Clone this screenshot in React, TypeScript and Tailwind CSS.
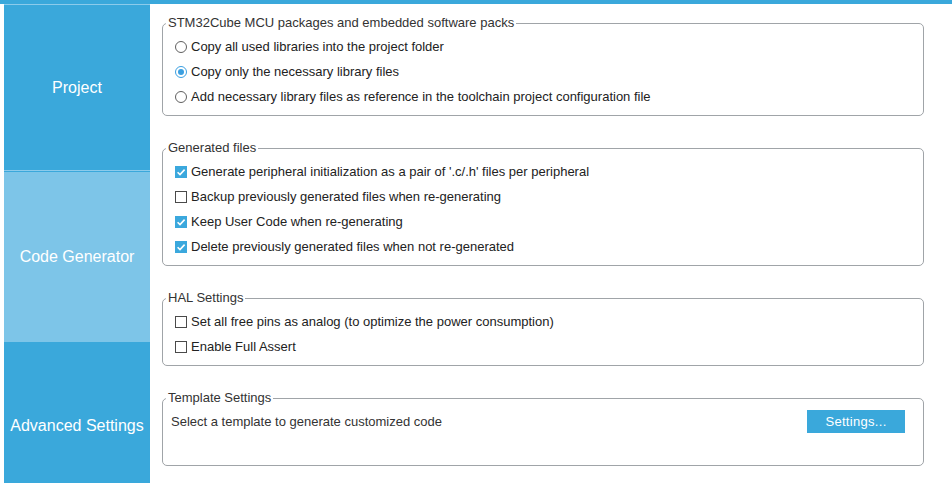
import React from "react";

const font = { fontFamily: '"Liberation Sans", Arial, sans-serif' };

function Radio({ checked }: { checked?: boolean }) {
  return (
    <svg width="12" height="12" viewBox="0 0 12 12" className="shrink-0">
      <circle cx="6" cy="6" r="5.5" fill="#fff" stroke={checked ? "#3b9fe0" : "#5f5f5f"} strokeWidth="1" />
      {checked && <circle cx="6" cy="6" r="3" fill="#3b9fe0" />}
    </svg>
  );
}

function Check({ checked }: { checked?: boolean }) {
  return checked ? (
    <svg width="12" height="12" viewBox="0 0 12 12" className="shrink-0">
      <rect x="0" y="0" width="12" height="12" fill="#3ba8dd" />
      <path d="M2.6 6.2 L5 8.6 L9.6 3.6" fill="none" stroke="#fff" strokeWidth="1.6" />
    </svg>
  ) : (
    <svg width="12" height="12" viewBox="0 0 12 12" className="shrink-0">
      <rect x="0.5" y="0.5" width="11" height="11" fill="#fff" stroke="#4a4a4a" strokeWidth="1" />
    </svg>
  );
}

function Group({ title, children, className = "" }: { title: string; children: React.ReactNode; className?: string }) {
  return (
    <div className={`relative shrink-0 border border-[#a0a4a8] rounded-[5px] pl-[12px] pt-[10px] ${className}`}>
      <span className="absolute -top-[9px] left-[3px] px-[2px] bg-white text-[13px] leading-[16px] text-[#333]">
        {title}
      </span>
      {children}
    </div>
  );
}

function Row({ children }: { children: React.ReactNode }) {
  return <div className="flex items-center h-[25px] gap-[4px] text-[13px] text-[#222]">{children}</div>;
}

export default function App() {
  return (
    <div className="w-[952px] h-[483px] overflow-hidden bg-white flex flex-col" style={font}>
      <div className="h-[4px] bg-[#3aa8db] shrink-0" />
      <div className="flex flex-1 min-h-0">
        <div className="w-[4px] shrink-0" />
        <div className="w-[146px] shrink-0 bg-[#3aa8db] flex flex-col text-white text-[16px] overflow-hidden">
          <div className="h-px shrink-0 bg-[#8ccbeb]" />
          <div className="h-[165px] shrink-0 flex items-center justify-center">Project</div>
          <div className="h-px shrink-0 bg-[#8ccbeb]" />
          <div className="h-[170px] shrink-0 mt-px bg-[#7dc5e8] flex items-center justify-center">Code Generator</div>
          <div className="h-[168px] shrink-0 flex items-center justify-center">Advanced Settings</div>
        </div>
        <div className="flex-1 pl-[12px] pr-[28px] pt-[19px] flex flex-col gap-[32px]">
          <Group title="STM32Cube MCU packages and embedded software packs" className="pb-[6px]">
            <Row>
              <Radio />
              <span>Copy all used libraries into the project folder</span>
            </Row>
            <Row>
              <Radio checked />
              <span>Copy only the necessary library files</span>
            </Row>
            <Row>
              <Radio />
              <span>Add necessary library files as reference in the toolchain project configuration file</span>
            </Row>
          </Group>
          <Group title="Generated files" className="pb-[6px]">
            <Row>
              <Check checked />
              <span>Generate peripheral initialization as a pair of '.c/.h' files per peripheral</span>
            </Row>
            <Row>
              <Check />
              <span>Backup previously generated files when re-generating</span>
            </Row>
            <Row>
              <Check checked />
              <span>Keep User Code when re-generating</span>
            </Row>
            <Row>
              <Check checked />
              <span>Delete previously generated files when not re-generated</span>
            </Row>
          </Group>
          <Group title="HAL Settings" className="pb-[6px]">
            <Row>
              <Check />
              <span>Set all free pins as analog (to optimize the power consumption)</span>
            </Row>
            <Row>
              <Check />
              <span>Enable Full Assert</span>
            </Row>
          </Group>
          <Group title="Template Settings" className="pb-[31px]">
            <div className="flex items-center justify-between h-[25px] -ml-[4px] pr-[18px] text-[13px] text-[#333]">
              <span>Select a template to generate customized code</span>
              <button className="w-[98px] h-[23px] bg-[#3aa8db] text-white text-[13px] tracking-[0.3px] flex items-center justify-center">
                Settings...
              </button>
            </div>
          </Group>
        </div>
      </div>
    </div>
  );
}
